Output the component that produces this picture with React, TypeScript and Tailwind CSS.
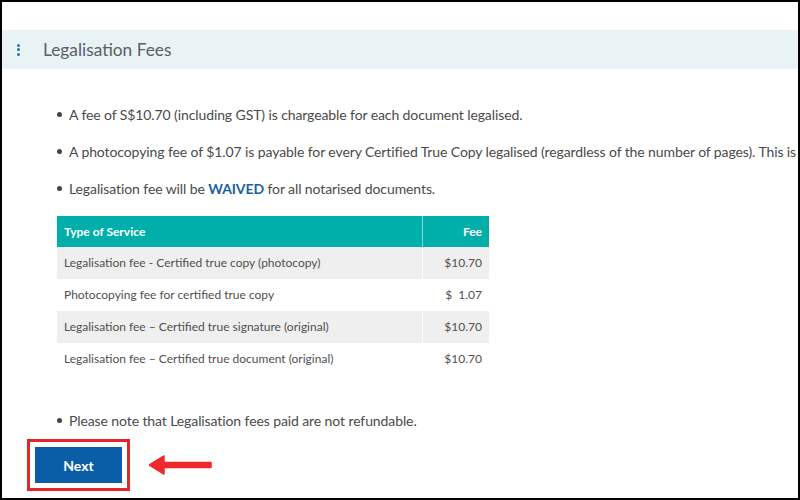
const ROWS = [
  { service: 'Legalisation fee - Certified true copy (photocopy)', fee: '$10.70' },
  { service: 'Photocopying fee for certified true copy', fee: '$  1.07' },
  { service: 'Legalisation fee – Certified true signature (original)', fee: '$10.70' },
  { service: 'Legalisation fee – Certified true document (original)', fee: '$10.70' },
];

function Bullet({ children }: { children: React.ReactNode }) {
  return (
    <li className="flex items-center h-[22px] whitespace-nowrap">
      <span className="w-[5px] h-[5px] rounded-full bg-[#444] mr-[7px] shrink-0" />
      <span>{children}</span>
    </li>
  );
}

export default function App() {
  return (
    <div
      className="w-[800px] h-[500px] border-2 border-black bg-white overflow-hidden text-[#4a4a4a]"
      style={{ fontFamily: 'Lato, "Open Sans", sans-serif' }}
    >
      {/* Section header */}
      <div className="mt-[28px] h-[39px] bg-[#e9f2f5] flex items-center">
        <div className="ml-[15px] w-[3px] flex flex-col gap-[1.5px]">
          <span className="w-[3px] h-[3px] rounded-full bg-[#2c6fb3]" />
          <span className="w-[3px] h-[3px] rounded-full bg-[#2c6fb3]" />
          <span className="w-[3px] h-[3px] rounded-full bg-[#2c6fb3]" />
        </div>
        <h2 className="ml-[23px] mt-[1px] text-[17.3px] text-[#5a5f66]">Legalisation Fees</h2>
      </div>

      <div className="pl-[55px]">
        <ul className="mt-[34px] flex flex-col gap-[15px] text-[14px] tracking-[-0.1px]">
          <Bullet>A fee of S$10.70 (including GST) is chargeable for each document legalised.</Bullet>
          <Bullet>
            A photocopying fee of $1.07 is payable for every Certified True Copy legalised (regardless of the number of pages). This is a
          </Bullet>
          <Bullet>
            Legalisation fee will be <b className="text-[#1b5fa3] font-bold">WAIVED</b> for all notarised documents.
          </Bullet>
        </ul>

        <table className="mt-[17px] w-[432px] border-collapse text-[12px]">
          <thead>
            <tr className="bg-[#00aeaa] text-white h-[31px]">
              <th className="text-left font-bold px-[7px] border-r border-[#7fd6d4]">Type of Service</th>
              <th className="text-right font-bold px-[7px] w-[67px]">Fee</th>
            </tr>
          </thead>
          <tbody>
            {ROWS.map((r, i) => (
              <tr key={i} className={i % 2 === 0 ? 'bg-[#efefef] h-[32px]' : 'bg-white h-[32px]'}>
                <td className="px-[7px] border-r border-white text-[#505050]">{r.service}</td>
                <td className="px-[7px] text-right whitespace-pre text-[#505050]">{r.fee}</td>
              </tr>
            ))}
          </tbody>
        </table>

        <ul className="mt-[34px] text-[14px] tracking-[-0.1px]">
          <Bullet>Please note that Legalisation fees paid are not refundable.</Bullet>
        </ul>
      </div>

      <div className="mt-[8px] ml-[25px] flex items-center">
        <div className="border-[3px] border-[#e3262c] p-[5px]">
          <button className="w-[87px] h-[36px] bg-[#0a5ea8] text-white text-[14px] font-bold">Next</button>
        </div>
        <svg className="ml-[19px]" width="64" height="22" viewBox="0 0 64 22">
          <path d="M0 11 L15 2 L15 8.5 L62 8.5 L62 13.5 L15 13.5 L15 20 Z" fill="#ee2a2f" strokeLinejoin="round" stroke="#ee2a2f" strokeWidth="1.5" />
        </svg>
      </div>
    </div>
  );
}
